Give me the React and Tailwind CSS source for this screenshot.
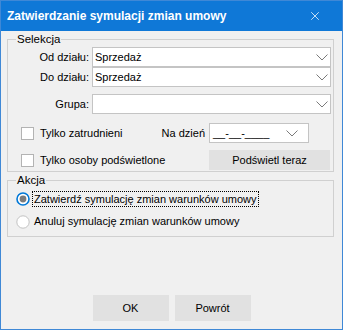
import { X } from 'lucide-react'

const FONT = { fontFamily: '"Liberation Sans", Arial, sans-serif' }

const Chevron = ({ className = '' }) => (
  <svg width="12" height="7" viewBox="0 0 12 7" className={className}>
    <path d="M0.5 0.5 L6 6 L11.5 0.5" fill="none" stroke="#7a7a7a" strokeWidth="1" />
  </svg>
)

const Combo = ({ value = '' }) => (
  <div className="flex items-center h-[20px] w-[239px] bg-white border border-[#c4c4c4] pl-[2px] pr-[2px]">
    <span className="flex-1 text-black">{value}</span>
    <Chevron />
  </div>
)

const Checkbox = () => (
  <div className="w-[13px] h-[13px] border border-[#b3b3b3] bg-white shrink-0" />
)

const Radio = ({ checked }) => (
  <svg width="14" height="14" viewBox="0 0 14 14" className="shrink-0">
    {checked ? (
      <>
        <circle cx="7" cy="7" r="6" fill="white" stroke="#0078d7" strokeWidth="1.6" />
        <circle cx="7" cy="7" r="3.4" fill="#7b7b7b" />
      </>
    ) : (
      <circle cx="7" cy="7" r="6.2" fill="white" stroke="#c2c2c2" strokeWidth="1" />
    )}
  </svg>
)

export default function App() {
  return (
    <div
      className="w-[343px] h-[330px] flex flex-col bg-[#f0f0f0] border border-[#3f88d6] text-[11px] text-black"
      style={FONT}
    >
      {/* Title bar */}
      <div className="h-[30px] bg-[#0f78d7] flex items-center pl-[6px] pr-[20px] shrink-0">
        <span className="flex-1 text-white font-bold text-[12px]">Zatwierdzanie symulacji zmian umowy</span>
        <X size={14} color="white" strokeWidth={1.3} />
      </div>

      {/* Selekcja */}
      <fieldset className="ml-[6px] w-[327px] border border-[#d0d0d0] pb-[1px]">
        <legend className="ml-[8px] px-[1px] h-[16px] leading-[16px] text-[11.5px]">Selekcja</legend>

        <div className="grid grid-cols-[81px_239px] gap-x-[3px]">
          <span className="text-right self-center">Od działu:</span>
          <Combo value="Sprzedaż" />
          <span className="text-right self-center">Do działu:</span>
          <Combo value="Sprzedaż" />
          <span className="text-right self-center mt-[7px]">Grupa:</span>
          <div className="mt-[7px]">
            <Combo />
          </div>
        </div>

        <div className="flex items-center mt-[9px] h-[20px]">
          <div className="w-[201px] flex items-center pl-[13px]">
            <Checkbox />
            <span className="ml-[6px] flex-1">Tylko zatrudnieni</span>
            <span className="pr-[4px]">Na dzień</span>
          </div>
          <div className="w-[100px] h-[20px] bg-white border border-[#c4c4c4] flex items-center pl-[3px] pr-[10px]">
            <span className="flex-1">__-__-____</span>
            <Chevron />
          </div>
        </div>

        <div className="flex items-center mt-[7px] h-[20px]">
          <div className="w-[201px] flex items-center pl-[13px]">
            <Checkbox />
            <span className="ml-[6px]">Tylko osoby podświetlone</span>
          </div>
          <button className="w-[121px] h-[20px] bg-[#e1e1e1] text-center">Podświetl teraz</button>
        </div>
      </fieldset>

      {/* Akcja */}
      <fieldset className="ml-[6px] w-[327px] border border-[#d0d0d0] pb-[6px]">
        <legend className="ml-[8px] px-[1px] h-[16px] leading-[16px] text-[11.5px]">Akcja</legend>
        <div className="flex items-center ml-[8px] mt-[2px] h-[17px]">
          <Radio checked />
          <span className="ml-[2px] px-[1px] border border-dotted border-black leading-[14px]">
            Zatwierdź symulację zmian warunków umowy
          </span>
        </div>
        <div className="flex items-center ml-[8px] mt-[6px] h-[17px]">
          <Radio />
          <span className="ml-[4px]">Anuluj symulację zmian warunków umowy</span>
        </div>
      </fieldset>

      <div className="flex-1" />

      <div className="flex justify-center gap-[6px] mb-[8px]">
        <button className="w-[76px] h-[26px] bg-[#e1e1e1]">OK</button>
        <button className="w-[76px] h-[26px] bg-[#e1e1e1]">Powrót</button>
      </div>
    </div>
  )
}
